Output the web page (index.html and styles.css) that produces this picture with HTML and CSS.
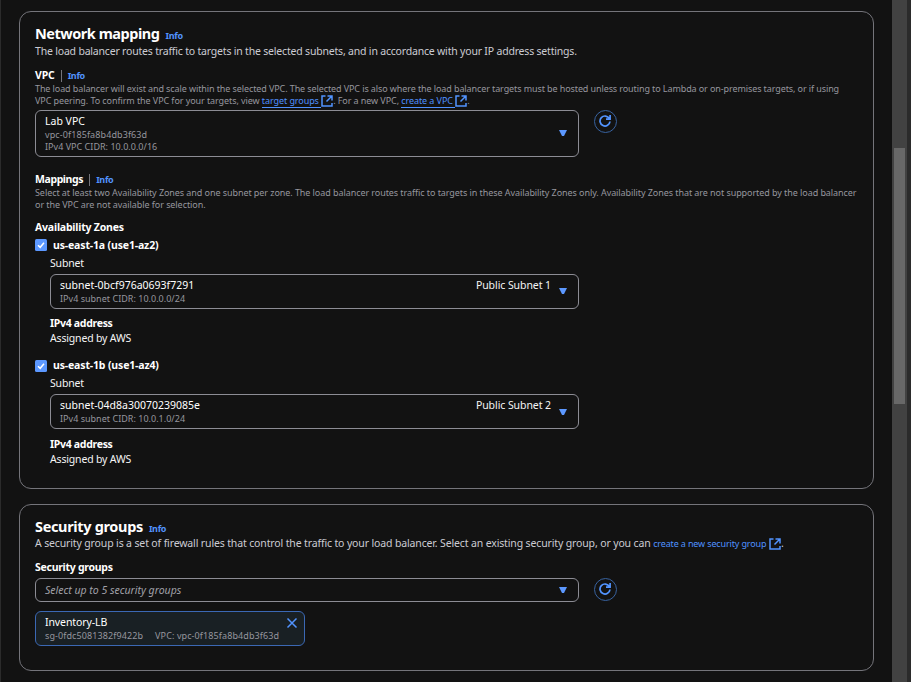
FILE: index.html
```html
<!DOCTYPE html>
<html lang="en">
<head>
<meta charset="utf-8">
<title>Create load balancer</title>
<link rel="stylesheet" href="styles.css">
</head>
<body>
<svg class="defs" aria-hidden="true">
  <symbol id="external" viewBox="0 0 12 12"><path d="M4.500 1H1v10h10V8M6.500 1H11v4.500M10.700 1.300 5.500 6.500"/></symbol>
  <symbol id="refresh" viewBox="0 0 12 12"><path d="M11 6.500A5 5 0 1 1 10.400 3.600M11.100 0v4.100H7"/></symbol>
  <symbol id="caret" viewBox="0 0 8 6"><path d="M0 0h8L5 6H3z"/></symbol>
</svg>
<div class="app">
  <main class="content">
    <section class="panel mapping">
      <header class="head"><h2 class="h-net">Network mapping</h2><a class="info">Info</a></header>
      <p class="desc d-net">The load balancer routes traffic to targets in the selected subnets, and in accordance with your IP address settings.</p>

      <div class="label vpc-label"><b>VPC</b><i class="bar"></i><a class="info">Info</a></div>
      <p class="hint"><span class="hint-1">The load balancer will exist and scale within the selected VPC. The selected VPC is also where the load balancer targets must be hosted unless routing to Lambda or on-premises targets, or if using</span><br><span class="hint-2">VPC peering. To confirm the VPC for your targets, view <a class="link">target groups&nbsp;</a><svg class="ext"><use href="#external"/></svg>. For a new VPC, <a class="link">create a VPC&nbsp;</a><svg class="ext"><use href="#external"/></svg>.</span></p>
      <div class="control vpc-control">
        <div class="select tall">
          <div class="option"><span class="main">Lab VPC</span><span class="sub id">vpc-0f185fa8b4db3f63d</span><span class="sub">IPv4 VPC CIDR: 10.0.0.0/16</span></div>
          <svg class="caret"><use href="#caret"/></svg>
        </div>
        <button class="refresh"><svg><use href="#refresh"/></svg></button>
      </div>

      <div class="label map-label"><b>Mappings</b><i class="bar"></i><a class="info">Info</a></div>
      <p class="hint"><span class="hint-3">Select at least two Availability Zones and one subnet per zone. The load balancer routes traffic to targets in these Availability Zones only. Availability Zones that are not supported by the load balancer</span><br><span class="hint-4">or the VPC are not available for selection.</span></p>

      <div class="label zones-label"><b>Availability Zones</b></div>
      <div class="zone">
        <div class="check"><svg class="box" viewBox="0 0 12 12"><rect width="12" height="12" rx="1.500"/><path d="M3 6.200 5.200 8.300 9 3.800"/></svg><b>us-east-1a (use1-az2)</b></div>
        <div class="zone-body">
          <div class="text">Subnet</div>
          <div class="select">
            <div class="option"><span class="main">subnet-0bcf976a0693f7291</span><span class="sub">IPv4 subnet CIDR: 10.0.0.0/24</span></div>
            <span class="tag">Public Subnet 1</span>
            <svg class="caret"><use href="#caret"/></svg>
          </div>
          <div class="text address"><b>IPv4 address</b></div>
          <div class="text">Assigned by AWS</div>
        </div>
      </div>
      <div class="zone second">
        <div class="check"><svg class="box" viewBox="0 0 12 12"><rect width="12" height="12" rx="1.500"/><path d="M3 6.200 5.200 8.300 9 3.800"/></svg><b>us-east-1b (use1-az4)</b></div>
        <div class="zone-body">
          <div class="text">Subnet</div>
          <div class="select">
            <div class="option"><span class="main">subnet-04d8a30070239085e</span><span class="sub">IPv4 subnet CIDR: 10.0.1.0/24</span></div>
            <span class="tag">Public Subnet 2</span>
            <svg class="caret"><use href="#caret"/></svg>
          </div>
          <div class="text address"><b>IPv4 address</b></div>
          <div class="text">Assigned by AWS</div>
        </div>
      </div>
    </section>

    <section class="panel groups">
      <header class="head"><h2 class="h-sec">Security groups</h2><a class="info">Info</a></header>
      <p class="desc d-sec">A security group is a set of firewall rules that control the traffic to your load balancer. Select an existing security group, or you can <a class="small-link">create a new security group</a> <svg class="ext"><use href="#external"/></svg>.</p>
      <div class="label sg-label"><b>Security groups</b></div>
      <div class="control">
        <div class="select short"><span class="placeholder">Select up to 5 security groups</span><svg class="caret"><use href="#caret"/></svg></div>
        <button class="refresh"><svg><use href="#refresh"/></svg></button>
      </div>
      <div class="token">
        <div class="option"><span class="main">Inventory-LB</span><span class="sub id pair"><span>sg-0fdc5081382f9422b</span><span>VPC: vpc-0f185fa8b4db3f63d</span></span></div>
        <svg class="close" viewBox="0 0 12 12"><path d="m1.500 1.500 9 9m0-9-9 9"/></svg>
      </div>
    </section>
  </main>
  <div class="scrollbar"><div class="thumb"></div></div>
</div>
</body>
</html>
```
FILE: styles.css
```css
* { box-sizing: border-box; }
body { margin: 0; background: #2b2b2b; color: #f5f5f5; font: 10.5px/15px "Noto Sans", sans-serif; overflow: hidden; }
h2, p { margin: 0; }
b { color: #fff; font-weight: 700; letter-spacing: -0.15px; }
.defs { display: none; }
.app { display: flex; height: 682px; }
.content { width: 892px; padding: 11px 18px 0 18px; border-left: 1px solid #2b2b2b; background: #121212; }
.panel { width: 855px; border: 1px solid #74747a; border-radius: 12px; padding: 12px 15px 0; white-space: nowrap; }
.mapping { height: 478px; }
.groups { height: 167px; margin-top: 15px; }
.head { display: flex; align-items: baseline; height: 19px; line-height: 19px; }
h2 { font-size: 14.5px; font-weight: 700; color: #fff; line-height: 19px; }
.h-net { letter-spacing: -0.47px; }
.h-sec { letter-spacing: -0.34px; }
.head .info { margin-left: 6px; }
.info { color: #5294ff; font-size: 9px; font-weight: 700; line-height: 12px; letter-spacing: -0.3px; }
.desc { color: #ccccd3; height: 15px; }
.mapping .desc { margin-top: 1px; }
.d-net { letter-spacing: -0.193px; }
.d-sec { letter-spacing: -0.14px; }
.label { display: flex; align-items: center; height: 15px; }
.vpc-label { margin-top: 9px; }
.bar { width: 1px; height: 12px; background: #75757b; margin: 1px 6px 0; }
.label .info { padding-top: 1px; }
.map-label b { letter-spacing: -0.4px; }
.zones-label b { letter-spacing: -0.2px; }
.address b { letter-spacing: -0.3px; }
.sg-label b { letter-spacing: -0.28px; }
.hint { color: #96969e; font-size: 9px; line-height: 12px; height: 24px; }
.hint-1 { letter-spacing: -0.099px; }
.hint-2 { letter-spacing: -0.08px; }
.hint-3 { letter-spacing: -0.069px; }
.hint-4 { letter-spacing: -0.07px; }
.link { color: #4f91ff; border-bottom: 1px solid #4f91ff; }
.small-link { color: #4f91ff; font-size: 9px; }
.ext, .refresh svg { fill: none; stroke: #5294ff; stroke-width: 1.500; overflow: visible; }
.ext { width: 12px; height: 12px; vertical-align: -3px; }
.control { display: flex; align-items: flex-start; gap: 15px; }
.vpc-control { margin-top: 3px; }
.select { display: flex; align-items: center; width: 529px; height: 35px; border: 1px solid #8c8c94; border-radius: 6px; padding: 0 11px 0 9px; }
.control .select { width: 544px; }
.select.tall { height: 47px; }
.select.short { height: 24px; }
.option { display: flex; flex-direction: column; flex: 1; }
.main { line-height: 15px; color: #fff; }
.token .main { letter-spacing: -0.1px; }
.sub { font-size: 9px; line-height: 12px; color: #96969e; letter-spacing: 0.02px; }
.sub.id { letter-spacing: 0.1px; }
.tag { align-self: flex-start; margin: 3px 8px 0 0; letter-spacing: -0.07px; }
.caret { width: 8px; height: 6px; fill: #5c98ff; margin-bottom: 2px; }
.second .caret, .short .caret { margin-bottom: 0; }
.placeholder { flex: 1; font-style: italic; color: #a0a0a8; }
.refresh { display: grid; place-items: center; width: 23px; height: 23px; padding: 0 1px 1px 0; border: 1px solid #38629f; border-radius: 50%; background: none; }
.refresh svg { width: 12px; height: 12px; stroke-width: 1.700; }
.map-label { margin-top: 15px; }
.zones-label { margin-top: 9px; }
.zone { margin-top: 3px; }
.check { display: flex; align-items: center; height: 15px; gap: 6px; }
.box { width: 12px; height: 12px; margin-bottom: 1px; fill: #5c98ff; }
.second .box { margin-bottom: 0; }
.box path { fill: none; stroke: #fff; stroke-width: 1.500; }
.zone-body { padding: 3px 0 0 15px; }
.zone-body .select { margin-top: 3px; }
.text { letter-spacing: -0.17px; }
.address { margin-top: 7px; }
.second { margin-top: 12px; }
.second .address { margin-top: 8px; }
.sg-label { margin-top: 9px; margin-bottom: 3px; }
.token { display: flex; width: 270px; height: 35px; margin-top: 9px; padding: 3px 6px 0 9px; border: 1px solid #3b68b4; border-radius: 6px; background: #192024; }
.pair { display: flex; gap: 12px; }
.close { width: 12px; height: 12px; margin-top: 2px; fill: none; stroke: #5294ff; stroke-width: 1.500; }
.scrollbar { width: 15px; background: #424242; padding: 148px 2px 0; }
.thumb { width: 11px; height: 256px; background: #686868; }
```
